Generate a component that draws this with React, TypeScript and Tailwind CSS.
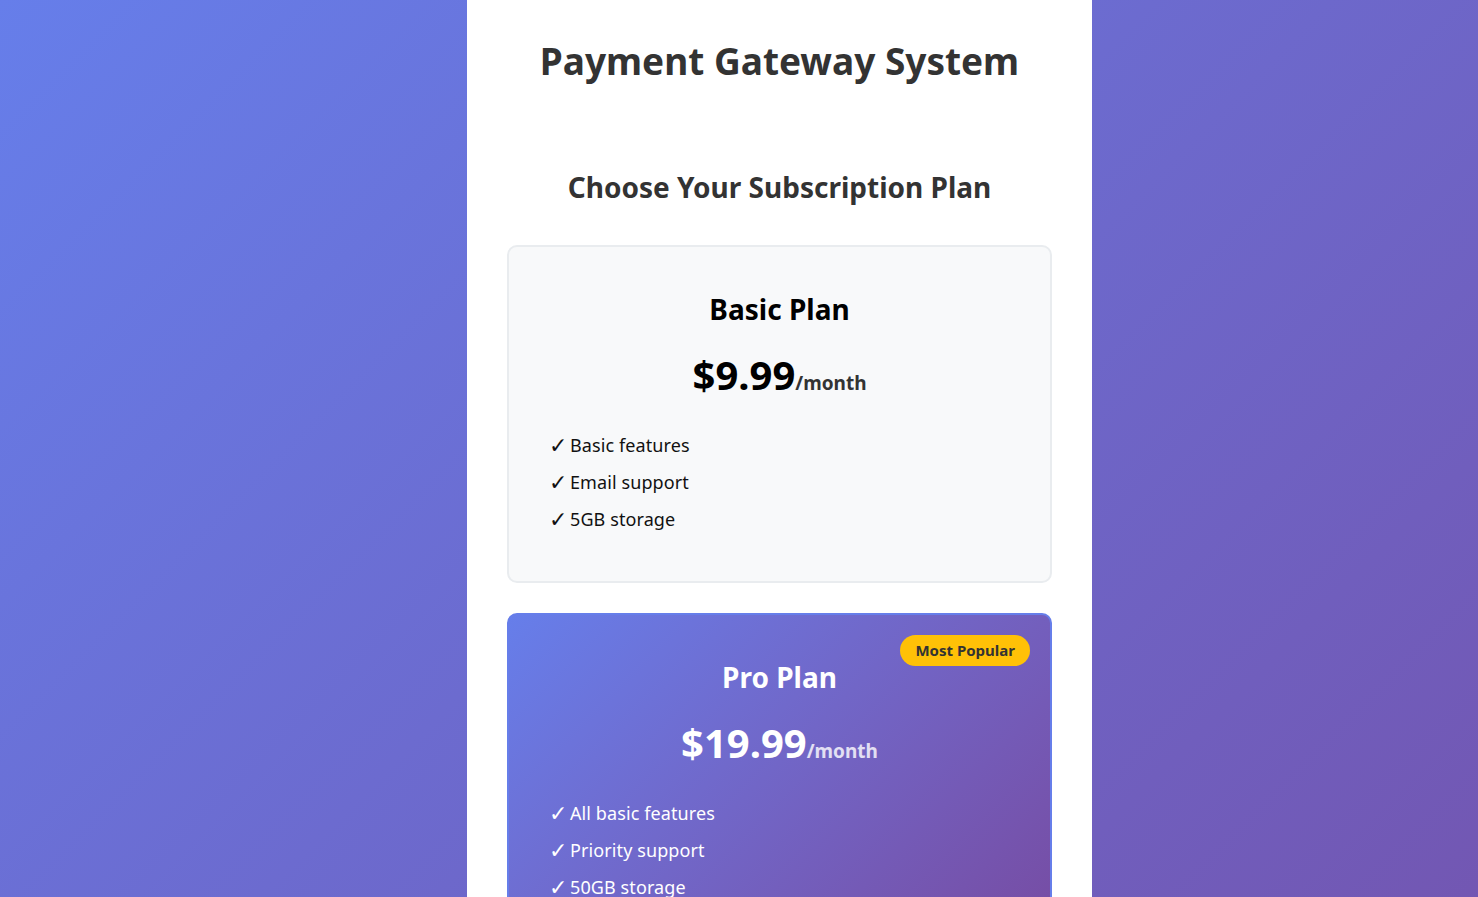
import React from "react";

const font = { fontFamily: '"Noto Sans", "Open Sans", sans-serif' };

function Feature({ children, light }: { children: React.ReactNode; light?: boolean }) {
  return (
    <li className={`h-[37px] flex items-center text-[18px] ${light ? "text-white" : "text-[#111]"}`}>
      <span className="mr-[5px] w-[16px] text-[22px] leading-none" style={{ fontFamily: '"DejaVu Sans", sans-serif' }}>✓</span>
      <span className="tracking-[0.1px]">{children}</span>
    </li>
  );
}

export default function App() {
  return (
    <div
      className="min-h-screen w-full bg-[linear-gradient(135deg,#667eea_0%,#764ba2_125%)] flex justify-center pl-[81px]"
      style={font}
    >
      <div className="w-[625px] bg-white px-[40px] pt-[37px] pb-[40px]">
        <h1 className="text-center text-[37px] leading-[48px] font-bold text-[#333]">
          Payment Gateway System
        </h1>
        <h2 className="mt-[85px] text-center text-[28px] leading-[34px] font-bold text-[#333]">
          Choose Your Subscription Plan
        </h2>

        <div className="mt-[41px] rounded-[10px] border-2 border-[#e9ecef] bg-[#f8f9fa] px-[40px] pt-[44px] pb-[43px]">
          <h3 className="text-center text-[28px] leading-[36px] font-bold text-black">Basic Plan</h3>
          <div className="mt-[24px] text-center leading-[48px]">
            <span className="text-[40px] font-bold text-black">$9.99</span>
            <span className="text-[19px] font-bold text-[#333]">/month</span>
          </div>
          <ul className="mt-[19px]">
            <Feature>Basic features</Feature>
            <Feature>Email support</Feature>
            <Feature>5GB storage</Feature>
          </ul>
        </div>

        <div className="relative mt-[30px] rounded-[10px] border-2 border-[#667eea] bg-linear-135 from-[#667eea] to-[#764ba2] px-[40px] pt-[44px] pb-[43px] text-white">
          <span className="absolute top-[20px] right-[20px] h-[31px] px-[15px] flex items-center rounded-full bg-[#ffc107] text-[#333] text-[15px] font-bold">
            Most Popular
          </span>
          <h3 className="text-center text-[28px] leading-[36px] font-bold">Pro Plan</h3>
          <div className="mt-[24px] text-center leading-[48px]">
            <span className="text-[40px] font-bold">$19.99</span>
            <span className="text-[19px] font-bold text-white/80">/month</span>
          </div>
          <ul className="mt-[19px]">
            <Feature light>All basic features</Feature>
            <Feature light>Priority support</Feature>
            <Feature light>50GB storage</Feature>
          </ul>
        </div>
      </div>
    </div>
  );
}
